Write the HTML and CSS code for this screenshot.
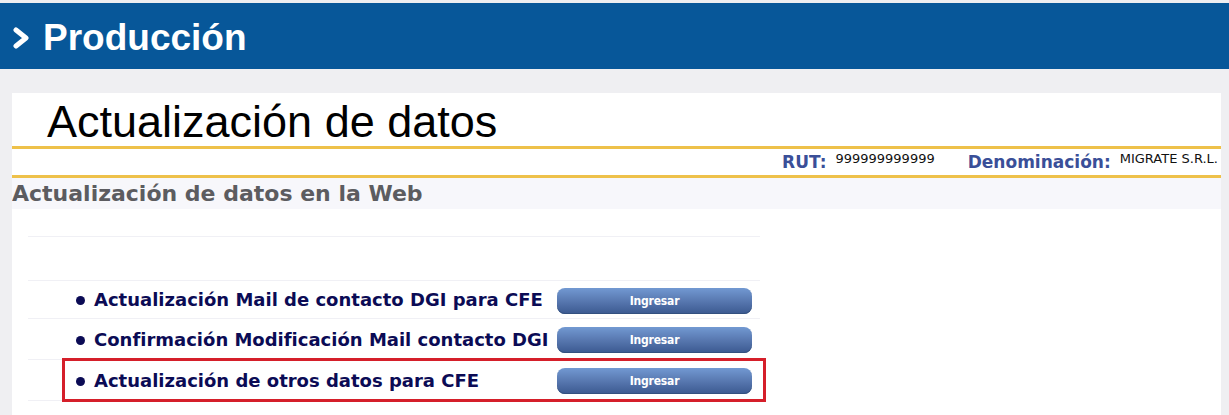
FILE: index.html
```html
<!DOCTYPE html>
<html lang="es">
<head>
<meta charset="utf-8">
<title>Producción</title>
<link rel="stylesheet" href="styles.css">
</head>
<body>
<div class="topstrip"></div>
<header class="banner">
  <svg class="chev" width="20" height="22" viewBox="0 0 20 22"><polyline points="4,3 14,11 4,19" fill="none" stroke="#fff" stroke-width="5" stroke-linecap="round" stroke-linejoin="round"/></svg>
  <h1 class="banner-title">Producción</h1>
</header>
<main class="panel">
  <div class="page-title">Actualización de datos</div>
  <div class="infobar">
    <span class="lbl">RUT:</span><span class="val">999999999999</span>
    <span class="lbl lbl-den">Denominación:</span><span class="val">MIGRATE S.R.L.</span>
  </div>
  <h2 class="section-title">Actualización de datos en la Web</h2>
  <div class="content">
    <div class="list">
      <div class="row row-empty"></div>
      <div class="row row-first">
        <div class="item"><span class="dot"></span>Actualización Mail de contacto DGI para CFE</div>
        <button class="btn">Ingresar</button>
      </div>
      <div class="row">
        <div class="item"><span class="dot"></span>Confirmación Modificación Mail contacto DGI</div>
        <button class="btn">Ingresar</button>
      </div>
      <div class="row row-marked">
        <div class="item"><span class="dot"></span>Actualización de otros datos para CFE</div>
        <button class="btn">Ingresar</button>
        <div class="highlight"></div>
      </div>
    </div>
  </div>
</main>
</body>
</html>
```
FILE: styles.css
```css
html, body {
  margin: 0;
  padding: 0;
}
body {
  background: #efeff2;
  font-family: "DejaVu Sans", Verdana, sans-serif;
  width: 1229px;
  height: 415px;
  overflow: hidden;
}
.topstrip {
  height: 3px;
  background: #eeeef1;
}
.banner {
  height: 66px;
  background: #075799;
  display: flex;
  align-items: center;
  padding-left: 12px;
}
.chev {
  display: block;
  margin-top: 3px;
}
.banner-title {
  margin: 0 0 0 11px;
  color: #fff;
  font-family: "Liberation Sans", Arial, sans-serif;
  font-weight: bold;
  font-size: 37px;
  line-height: 1;
  padding-top: 2px;
}
.panel {
  display: block;
  margin: 24px 8px 0 12px;
  background: #fbfbfd;
  height: 322px;
  overflow: hidden;
}
.page-title {
  height: 53px;
  background: #fff;
  padding-left: 35px;
  font-family: "Liberation Sans", Arial, sans-serif;
  font-size: 45px;
  line-height: 53px;
  color: #000;
  box-sizing: border-box;
  padding-top: 2px;
}
.infobar {
  height: 26px;
  border-top: 3px solid #eec14a;
  border-bottom: 3px solid #eec14a;
  background: #fff;
  display: flex;
  justify-content: flex-end;
  align-items: flex-start;
  padding-right: 3px;
}
.lbl {
  font-weight: bold;
  font-size: 17px;
  color: #3a4f98;
  margin-top: 3px;
}
.lbl-den {
  margin-left: 33px;
}
.val {
  font-size: 13px;
  color: #111;
  margin-left: 9px;
  margin-top: 2px;
}
.section-title {
  margin: 0;
  height: 31px;
  background: #f7f7fb;
  font-size: 22px;
  font-weight: bold;
  color: #5c5c60;
  line-height: 31px;
}
.content {
  background: #fff;
  height: 206px;
  padding: 27px 0 0 16px;
  box-sizing: border-box;
}
.list {
  width: 732px;
  border-top: 1px solid #f0f0f5;
}
.row {
  display: flex;
  align-items: center;
  height: 40px;
  border-bottom: 1px solid #f0f0f5;
  position: relative;
}
.row-empty {
  height: 43px;
}
.row-first {
  height: 37px;
}
.item {
  width: 529px;
  flex-shrink: 0;
  padding-left: 48px;
  box-sizing: border-box;
  font-weight: bold;
  font-size: 18px;
  color: #0b0b55;
  display: flex;
  align-items: center;
  white-space: nowrap;
}
.dot {
  flex-shrink: 0;
  width: 9px;
  height: 9px;
  border-radius: 50%;
  background: #0b0b55;
  margin-right: 9px;
  margin-top: 2px;
}
.btn {
  flex-shrink: 0;
  width: 195px;
  height: 26px;
  margin-top: 2px;
  border: none;
  border-radius: 8px;
  background: linear-gradient(#7299d2, #5878b0 50%, #3b5990);
  box-shadow: inset 0 -1px 0 #33507f;
  color: #fff;
  font-family: "DejaVu Sans Condensed", "DejaVu Sans", sans-serif;
  font-weight: bold;
  font-size: 12px;
  padding: 0;
  letter-spacing: -0.2px;
}
.highlight {
  position: absolute;
  left: 34px;
  top: -2px;
  width: 704px;
  height: 44px;
  border: 3px solid #d51f2a;
  box-sizing: border-box;
  pointer-events: none;
}
```
